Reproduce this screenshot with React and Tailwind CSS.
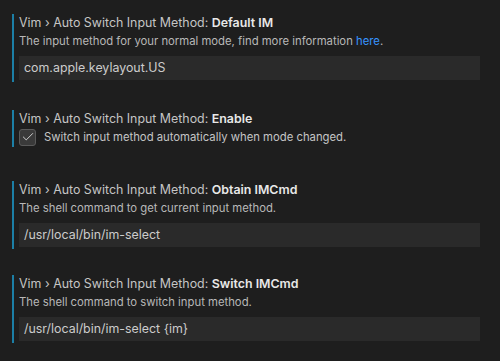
import { Check } from "lucide-react";

const font = { fontFamily: "Inter, 'Noto Sans', sans-serif" };

function Title({ label }) {
  return (
    <div className="h-[18px] text-[12.4px] leading-[18px] text-[#c5c5c5]">
      Vim › Auto Switch Input Method: <span className="font-semibold text-[#e8e8e8]">{label}</span>
    </div>
  );
}

function Setting({ label, children, className }) {
  return (
    <div className={`ml-3 border-l-2 border-[#1c7fa6] pl-[5px] pr-[20px] ${className}`}>
      <Title label={label} />
      {children}
    </div>
  );
}

function TextInput({ value }) {
  return (
    <div className="mt-[6px] flex h-[24px] items-center bg-[#2a2a2a] pl-[5px] text-[12.4px] text-[#cccccc]">
      {value}
    </div>
  );
}

function Description({ children }) {
  return <div className="h-[18px] text-[11.3px] leading-[18px] text-[#b8b8b8]">{children}</div>;
}

export default function App() {
  return (
    <div className="h-[361px] w-[500px] overflow-hidden bg-[#1e1e1e] pt-[14px]" style={font}>
      <Setting label="Default IM" className="pb-[2px]">
        <Description>
          The input method for your normal mode, find more information{" "}
          <span className="text-[#3794ff]">here</span>.
        </Description>
        <TextInput value="com.apple.keylayout.US" />
      </Setting>

      <Setting label="Enable" className="mt-[28px] pb-[1px]">
        <div className="flex h-[18px] items-center gap-[8px]">
          <span className="flex h-[17px] w-[17px] items-center justify-center rounded-[3px] border border-[#5a5a5a] bg-[#3a3a3a]">
            <Check size={14} strokeWidth={1.6} className="text-[#d8d8d8]" />
          </span>
          <span className="text-[11.3px] text-[#c5c5c5]">Switch input method automatically when mode changed.</span>
        </div>
      </Setting>

      <Setting label="Obtain IMCmd" className="mt-[34px] pb-[2px]">
        <Description>The shell command to get current input method.</Description>
        <TextInput value="/usr/local/bin/im-select" />
      </Setting>

      <Setting label="Switch IMCmd" className="mt-[26px] pb-[2px]">
        <Description>The shell command to switch input method.</Description>
        <TextInput value="/usr/local/bin/im-select {im}" />
      </Setting>
    </div>
  );
}
